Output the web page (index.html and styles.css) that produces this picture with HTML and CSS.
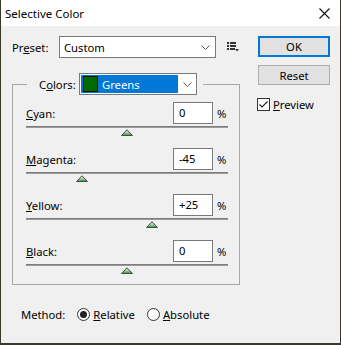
FILE: index.html
```html
<!DOCTYPE html>
<html lang="en">
<head>
    <meta charset="UTF-8">
    <title>Selective Color</title>
    <link rel="stylesheet" href="styles.css">
</head>
<body>
    <div class="window">
        <div class="titlebar">
            <span class="title">Selective Color</span>
            <svg class="close" width="11" height="11" viewBox="0 0 11 11">
                <path d="M0.5 0.5 L10.5 10.5 M10.5 0.5 L0.5 10.5" stroke="#111" stroke-width="1.1" fill="none"/>
            </svg>
        </div>

        <div class="client">
            <div class="main">
                <div class="preset-row">
                    <span class="preset-label">Pr<u>e</u>set:</span>
                    <div class="select preset-select">
                        <span>Custom</span>
                        <svg class="chevron" width="9" height="5" viewBox="0 0 9 5">
                            <path d="M0.5 0.5 L4.5 4.5 L8.5 0.5" stroke="#555" fill="none"/>
                        </svg>
                    </div>
                    <svg class="menu-icon" width="12" height="10" viewBox="0 0 12 10">
                        <rect x="0" y="0" width="2" height="2" fill="#333"/>
                        <rect x="3" y="0" width="6" height="2" fill="#333"/>
                        <rect x="0" y="3" width="2" height="2" fill="#333"/>
                        <rect x="3" y="3" width="6" height="2" fill="#333"/>
                        <rect x="0" y="6" width="2" height="2" fill="#333"/>
                        <rect x="3" y="6" width="5" height="2" fill="#333"/>
                        <path d="M8 7 L12 7 L10 9.5 Z" fill="#333"/>
                    </svg>
                </div>

                <fieldset class="group">
                    <legend class="group-legend">
                        <span class="colors-label">C<u>o</u>lors:</span>
                        <div class="select colors-select">
                            <div class="colors-current">
                                <span class="swatch"></span>
                                <span>Greens</span>
                            </div>
                            <svg class="chevron" width="9" height="5" viewBox="0 0 9 5">
                                <path d="M0.5 0.5 L4.5 4.5 L8.5 0.5" stroke="#555" fill="none"/>
                            </svg>
                        </div>
                    </legend>

                    <div class="adjust">
                        <div class="adjust-head">
                            <span class="adjust-label"><u>C</u>yan:</span>
                            <div class="field">0</div>
                            <span class="pct">%</span>
                        </div>
                        <div class="slider">
                            <div class="track"></div>
                            <svg class="thumb" style="left: 50%" width="12" height="7" viewBox="0 0 12 7">
                                <defs>
                                    <linearGradient id="g1" x1="0" y1="0" x2="0" y2="1">
                                        <stop offset="0" stop-color="#e8f4e8"/>
                                        <stop offset="0.5" stop-color="#9fd39f"/>
                                        <stop offset="1" stop-color="#2f8f3a"/>
                                    </linearGradient>
                                </defs>
                                <path d="M0.5 6.5 L6 0.8 L11.5 6.5 Z" fill="url(#g1)" stroke="#4a4a4a" stroke-width="1"/>
                            </svg>
                        </div>
                    </div>

                    <div class="adjust">
                        <div class="adjust-head">
                            <span class="adjust-label"><u>M</u>agenta:</span>
                            <div class="field">-45</div>
                            <span class="pct">%</span>
                        </div>
                        <div class="slider">
                            <div class="track"></div>
                            <svg class="thumb" style="left: 27.5%" width="12" height="7" viewBox="0 0 12 7">
                                <path d="M0.5 6.5 L6 0.8 L11.5 6.5 Z" fill="url(#g1)" stroke="#4a4a4a" stroke-width="1"/>
                            </svg>
                        </div>
                    </div>

                    <div class="adjust">
                        <div class="adjust-head">
                            <span class="adjust-label"><u>Y</u>ellow:</span>
                            <div class="field">+25</div>
                            <span class="pct">%</span>
                        </div>
                        <div class="slider">
                            <div class="track"></div>
                            <svg class="thumb" style="left: 62.5%" width="12" height="7" viewBox="0 0 12 7">
                                <path d="M0.5 6.5 L6 0.8 L11.5 6.5 Z" fill="url(#g1)" stroke="#4a4a4a" stroke-width="1"/>
                            </svg>
                        </div>
                    </div>

                    <div class="adjust">
                        <div class="adjust-head">
                            <span class="adjust-label"><u>B</u>lack:</span>
                            <div class="field">0</div>
                            <span class="pct">%</span>
                        </div>
                        <div class="slider">
                            <div class="track"></div>
                            <svg class="thumb" style="left: 50%" width="12" height="7" viewBox="0 0 12 7">
                                <path d="M0.5 6.5 L6 0.8 L11.5 6.5 Z" fill="url(#g1)" stroke="#4a4a4a" stroke-width="1"/>
                            </svg>
                        </div>
                    </div>
                </fieldset>

                <div class="method">
                    <span class="method-label">Method:</span>
                    <span class="radio checked"></span>
                    <span class="radio-text"><u>R</u>elative</span>
                    <span class="radio"></span>
                    <span class="radio-text"><u>A</u>bsolute</span>
                </div>
            </div>

            <div class="side">
                <div class="button default">OK</div>
                <div class="button">Reset</div>
                <div class="check-row">
                    <svg class="checkbox" width="13" height="13" viewBox="0 0 13 13">
                        <rect x="0.5" y="0.5" width="12" height="12" fill="#fff" stroke="#333"/>
                        <path d="M2.5 6.5 L5 9 L10.5 3.5" stroke="#222" stroke-width="1.1" fill="none"/>
                    </svg>
                    <span><u>P</u>review</span>
                </div>
            </div>
        </div>
    </div>
</body>
</html>
```

FILE: styles.css
```css
body {
    margin: 0;
    font-family: "Noto Sans", sans-serif;
    font-size: 11.25px;
    color: #000;
}

.window {
    width: 341px;
    height: 345px;
    box-sizing: border-box;
    border-left: 1px solid #3b382c;
    border-right: 1px solid #3b382c;
    border-bottom: 2px solid #3b382c;
    background: #f0f0f0;
    display: flex;
    flex-direction: column;
}

.titlebar {
    height: 26px;
    flex: none;
    background: #fff;
    display: flex;
    align-items: center;
    justify-content: space-between;
    padding: 0 10px 0 4px;
}

.title {
    font-size: 11.5px;
}

.close {
    display: block;
}

.client {
    display: flex;
    padding: 10px 0 0 11px;
}

.main {
    width: 228px;
}

/* preset row */

.preset-row {
    display: flex;
    align-items: center;
    height: 22px;
}

.preset-label {
    width: 47px;
}

.select {
    box-sizing: border-box;
    height: 22px;
    border: 1px solid #7a7a7a;
    background: #fff;
    display: flex;
    align-items: center;
}

.preset-select {
    width: 157px;
    padding: 0 5px 0 4px;
    justify-content: space-between;
}

.menu-icon {
    margin-left: 11px;
    display: block;
}

/* colour group */

.group {
    margin: 15px 0 0;
    padding: 7px 11px 10px 13px;
    border: 1px solid #a8a8a8;
    min-width: 0;
}

.group-legend {
    margin-left: 1px;
    padding: 0 6px 0 12px;
    display: flex;
    align-items: center;
}

.colors-label {
    width: 40px;
}

.colors-select {
    width: 118px;
    padding: 1px 4px 1px 1px;
    justify-content: space-between;
}

.colors-current {
    width: 97px;
    height: 18px;
    background: #0078d7;
    color: #fff;
    display: flex;
    align-items: center;
}

.swatch {
    width: 13px;
    height: 14px;
    margin: 0 4px 0 2px;
    background: #006a00;
    border: 1px solid #111;
}

.adjust {
    margin-bottom: 12px;
}

.adjust:last-child {
    margin-bottom: 0;
}

.adjust-head {
    display: flex;
    align-items: center;
    height: 22px;
}

.adjust-label {
    flex: 1;
}

.field {
    box-sizing: border-box;
    width: 40px;
    height: 22px;
    border: 1px solid #7a7a7a;
    background: #fff;
    padding-left: 5px;
    line-height: 20px;
}

.pct {
    width: 11px;
    margin-left: 4px;
}

.slider {
    position: relative;
    height: 10px;
    margin-top: 2px;
}

.track {
    height: 2px;
    background: #9a9a9a;
    border-top: 1px solid #7d7d7d;
    box-sizing: border-box;
}

.thumb {
    position: absolute;
    top: 3px;
    margin-left: -6px;
    display: block;
}

/* method */

.method {
    display: flex;
    align-items: center;
    height: 20px;
    margin-top: 19px;
    padding-left: 9px;
}

.method-label {
    margin-right: 12px;
}

.radio {
    width: 13px;
    height: 13px;
    box-sizing: border-box;
    border: 1px solid #333;
    border-radius: 50%;
    background: #fff;
    position: relative;
}

.radio.checked::after {
    content: "";
    position: absolute;
    left: 2px;
    top: 2px;
    width: 7px;
    height: 7px;
    border-radius: 50%;
    background: #222;
}

.radio-text {
    margin: 0 12px 0 3px;
}

/* side buttons */

.side {
    margin-left: 18px;
    width: 72px;
}

.button {
    box-sizing: border-box;
    height: 20px;
    border: 1px solid #adadad;
    background: #e1e1e1;
    display: flex;
    align-items: center;
    justify-content: center;
    margin-top: 8px;
}

.button.default {
    height: 21px;
    margin-top: 0;
    border: 2px solid #0078d7;
}

.check-row {
    display: flex;
    align-items: center;
    margin-top: 12px;
    height: 15px;
    margin-left: -1px;
}

.checkbox {
    display: block;
    margin-right: 3px;
}
```
